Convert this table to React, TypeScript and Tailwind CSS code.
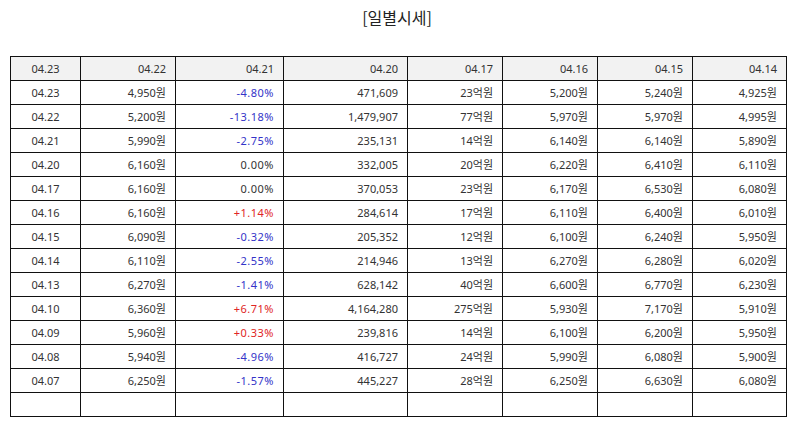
import React from "react";

type Row = [string, string, string, string, string, string, string, string];

const rows: Row[] = [
  ["04.23", "4,950원", "-4.80%", "471,609", "23억원", "5,200원", "5,240원", "4,925원"],
  ["04.22", "5,200원", "-13.18%", "1,479,907", "77억원", "5,970원", "5,970원", "4,995원"],
  ["04.21", "5,990원", "-2.75%", "235,131", "14억원", "6,140원", "6,140원", "5,890원"],
  ["04.20", "6,160원", "0.00%", "332,005", "20억원", "6,220원", "6,410원", "6,110원"],
  ["04.17", "6,160원", "0.00%", "370,053", "23억원", "6,170원", "6,530원", "6,080원"],
  ["04.16", "6,160원", "+1.14%", "284,614", "17억원", "6,110원", "6,400원", "6,010원"],
  ["04.15", "6,090원", "-0.32%", "205,352", "12억원", "6,100원", "6,240원", "5,950원"],
  ["04.14", "6,110원", "-2.55%", "214,946", "13억원", "6,270원", "6,280원", "6,020원"],
  ["04.13", "6,270원", "-1.41%", "628,142", "40억원", "6,600원", "6,770원", "6,230원"],
  ["04.10", "6,360원", "+6.71%", "4,164,280", "275억원", "5,930원", "7,170원", "5,910원"],
  ["04.09", "5,960원", "+0.33%", "239,816", "14억원", "6,100원", "6,200원", "5,950원"],
  ["04.08", "5,940원", "-4.96%", "416,727", "24억원", "5,990원", "6,080원", "5,900원"],
  ["04.07", "6,250원", "-1.57%", "445,227", "28억원", "6,250원", "6,630원", "6,080원"],
];

const header = ["04.23", "04.22", "04.21", "04.20", "04.17", "04.16", "04.15", "04.14"];

function pctClass(v: string) {
  if (v.startsWith("+")) return "text-[#e02525]";
  if (v.startsWith("-")) return "text-[#3434c8]";
  return "text-[#333333]";
}

export default function App() {
  return (
    <div
      className="w-[794px] h-[425px] bg-white text-[#333333] overflow-hidden"
      style={{ fontFamily: '"Noto Sans", "Noto Sans CJK KR", sans-serif' }}
    >
      <div className="pt-[5px] h-[56px] text-center text-[16px] leading-[24px] text-[#222222]" style={{ fontFamily: '"Noto Sans CJK KR", sans-serif' }}>
        [일별시세]
      </div>
      <table className="ml-[10px] w-[776px] table-fixed border-collapse text-[11px] leading-[14px]">
        <colgroup>
          <col className="w-[70px]" />
          <col className="w-[95px]" />
          <col className="w-[108px]" />
          <col className="w-[124px]" />
          <col className="w-[95px]" />
          <col className="w-[95px]" />
          <col className="w-[95px]" />
          <col className="w-[94px]" />
        </colgroup>
        <thead>
          <tr className="h-[24px] bg-[#f2f2f2]">
            {header.map((h, i) => (
              <th
                key={i}
                className={`border border-[#111111] font-normal px-[9px] ${i === 0 ? "text-center" : "text-right"}`}
              >
                {h}
              </th>
            ))}
          </tr>
        </thead>
        <tbody>
          {rows.map((r, ri) => (
            <tr key={ri} className="h-[24px]">
              {r.map((c, ci) => (
                <td
                  key={ci}
                  className={`border border-[#111111] px-[9px] ${ci === 0 ? "text-center" : "text-right"} ${ci === 2 ? pctClass(c) + " tracking-[0.5px]" : ""}`}
                >
                  {c}
                </td>
              ))}
            </tr>
          ))}
          <tr className="h-[24px]">
            {header.map((_, i) => (
              <td key={i} className="border border-[#111111]"></td>
            ))}
          </tr>
        </tbody>
      </table>
    </div>
  );
}
